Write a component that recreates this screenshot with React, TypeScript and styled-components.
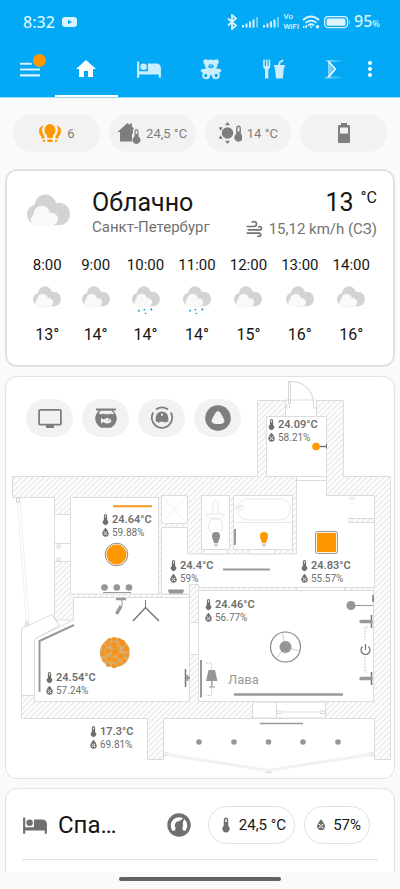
import React from "react";
import styled, { createGlobalStyle } from "styled-components";

const Global = createGlobalStyle`
  *, *::before, *::after { box-sizing: border-box; }
  body { margin: 0; background: #fafafa; font-family: Roboto, "Noto Sans", sans-serif; color: #161616; }
  button { font: inherit; color: inherit; border: 0; padding: 0; background: none; cursor: pointer; }
  h1, h2, p { margin: 0; font-weight: 400; }
`;

/* ---------- icons ---------- */

const paths = {
  home: "M10,20V14H14V20H19V12H22L12,3L2,12H5V20H10Z",
  bed: "M19,7H11V14H3V5H1V20H3V17H21V20H23V11A4,4 0 0,0 19,7M7,13A3,3 0 0,0 10,10A3,3 0 0,0 7,7A3,3 0 0,0 4,10A3,3 0 0,0 7,13Z",
  thermometer: "M15 13V5A3 3 0 0 0 9 5V13A5 5 0 1 0 15 13M12 4A1 1 0 0 1 13 5V8H11V5A1 1 0 0 1 12 4Z",
  humidity:
    "M12,3.25C12,3.25 6,10 6,14C6,17.32 8.69,20 12,20A6,6 0 0,0 18,14C18,10 12,3.25 12,3.25M14.47,9.97L15.53,11.03L9.53,17.03L8.47,15.97M9.75,10A1.25,1.25 0 0,1 11,11.25A1.25,1.25 0 0,1 9.75,12.5A1.25,1.25 0 0,1 8.5,11.25A1.25,1.25 0 0,1 9.75,10M14.25,14.5A1.25,1.25 0 0,1 15.5,15.75A1.25,1.25 0 0,1 14.25,17A1.25,1.25 0 0,1 13,15.75A1.25,1.25 0 0,1 14.25,14.5Z",
  wind: "M4,10A1,1 0 0,1 3,9A1,1 0 0,1 4,8H12A2,2 0 0,0 14,6A2,2 0 0,0 12,4C11.45,4 10.95,4.22 10.59,4.59C10.2,5 9.56,5 9.17,4.59C8.78,4.2 8.78,3.56 9.17,3.17C9.9,2.45 10.9,2 12,2A4,4 0 0,1 16,6A4,4 0 0,1 12,10H4M19,12A1,1 0 0,0 20,11A1,1 0 0,0 19,10C18.72,10 18.47,10.11 18.29,10.29C17.9,10.68 17.27,10.68 16.88,10.29C16.5,9.9 16.5,9.27 16.88,8.88C17.42,8.34 18.17,8 19,8A3,3 0 0,1 22,11A3,3 0 0,1 19,14H5A1,1 0 0,1 4,13A1,1 0 0,1 5,12H19M18,18H4A1,1 0 0,1 3,17A1,1 0 0,1 4,16H18A3,3 0 0,1 21,19A3,3 0 0,1 18,22C17.17,22 16.42,21.66 15.88,21.12C15.5,20.73 15.5,20.1 15.88,19.71C16.27,19.32 16.9,19.32 17.29,19.71C17.47,19.89 17.72,20 18,20A1,1 0 0,0 19,19A1,1 0 0,0 18,18Z",
  battery: "M16.67,4H15V2H9V4H7.33A1.33,1.33 0 0,0 6,5.33V20.67C6,21.4 6.6,22 7.33,22H16.67A1.33,1.33 0 0,0 18,20.67V5.33C18,4.6 17.4,4 16.67,4M16,12.5H8V6.5H16V12.5Z",
  dots: "M12,16A2,2 0 0,1 14,18A2,2 0 0,1 12,20A2,2 0 0,1 10,18A2,2 0 0,1 12,16M12,10A2,2 0 0,1 14,12A2,2 0 0,1 12,14A2,2 0 0,1 10,12A2,2 0 0,1 12,10M12,4A2,2 0 0,1 14,6A2,2 0 0,1 12,8A2,2 0 0,1 10,6A2,2 0 0,1 12,4Z",
  food: "M1.2,2.5H2.8V9H3.9V2.5H5.5V9H6.6V2.5H8.2V9Q8.2,11.8 6.4,12.4V21.5H3V12.4Q1.2,11.8 1.2,9ZM12,8H16.2L17,4.4L20.8,2.6L21.6,4.2L18.6,5.6L18,8H22.8V10.2H22L20.8,21.5H14L12.8,10.2H12Z",
  bulbs:
    "M12,3A6,6 0 0,0 6.5,9C6.5,11.5 7.6,13.2 9.2,14.5V17H14.8V14.5C16.4,13.2 17.5,11.5 17.5,9A6,6 0 0,0 12,3M9.2,18.5H14.8V20L14,21H10L9.2,20ZM4.5,4.8A6,6 0 0,0 1,10C1,12.5 2.2,14.3 3.5,15.3V17.5H6.5V15.2Q4,12.6 4,9Q4,6.500 5.500,4.800ZM19.5,4.8A6,6 0 0,1 23,10C23,12.5 21.8,14.3 20.5,15.3V17.5H17.5V15.2Q20,12.6 20,9Q20,6.5 18.5,4.8ZM4.5,19H7V21H5.500ZM19.5,19H17V21H18.5Z",
  homeTemp:
    "M10.5,2L0.5,11H3V20.5H15V14A4,4 0 0,1 16,12V9A3,3 0 0,1 17,7.3L15,5.8V2.5H13V4ZM19.5,8A2,2 0 0,0 17.5,10V15.5A4,4 1 1,0 21.5,15.5V10A2,2 0 0,0 19.5,8M19.5,9.2A.8,.8 0 0,1 20.3,10V13H18.7V10A.8,.8 0 0,1 19.5,9.2Z",
  sunTemp:
    "M9.5,6.2A5.8,5.8 0 1,0 15.3,12A5.8,5.8 0 0,0 9.5,6.2M9.5,1L12,4.2H7ZM9.5,23L12,19.8H7ZM0.5,6.5L4.6,6L2.8,9.8ZM0.5,17.5L4.6,18L2.8,14.2ZM20.5,4.5A2.4,2.4 0 0,0 18.1,6.9V13A4.2,4.2 0 1,0 22.9,13V6.9A2.4,2.4 0 0,0 20.5,4.5M20.5,6A.9,.9 0 0,1 21.4,7V10.5H19.6V7A.9,.9 0 0,1 20.5,6Z",
};

type IconName = keyof typeof paths;
const Glyph = styled.svg<{ $size?: number }>`
  display: block;
  flex: none;
  width: ${(p) => p.$size ?? 24}px;
  height: ${(p) => p.$size ?? 24}px;
  fill: currentColor;
`;
const Icon = ({ name, size }: { name: IconName; size?: number }) => (
  <Glyph viewBox="0 0 24 24" $size={size} aria-hidden>
    <path fillRule="evenodd" d={paths[name]} />
  </Glyph>
);

const BearIcon = () => (
  <Glyph viewBox="0 0 24 24" aria-hidden>
    <circle cx="6.800" cy="4.800" r="2.500" />
    <circle cx="17.200" cy="4.800" r="2.500" />
    <ellipse cx="12" cy="7.800" rx="6.500" ry="5.200" />
    <path d="M6 11.500h12l3.500.8q1.800 1.800-.5 3.200l-4 .5H7l-4-.5q-2.300-1.400-.5-3.200z" />
    <circle cx="7.200" cy="18.200" r="4" />
    <circle cx="16.800" cy="18.200" r="4" />
    <path d="M9 13h6v5H9z" />
    <g fill="#03a9f4">
      <ellipse cx="12" cy="9.300" rx="2.600" ry="2" />
      <ellipse cx="6.800" cy="18.600" rx="1.500" ry="1.800" />
      <ellipse cx="17.200" cy="18.600" rx="1.500" ry="1.800" />
    </g>
    <ellipse cx="12" cy="8.900" rx="1" ry=".7" />
  </Glyph>
);

const SigmaIcon = () => (
  <Glyph viewBox="0 0 24 24" aria-hidden>
    <defs>
      <linearGradient id="fade" x1="0" x2="1" y1="0" y2="0">
        <stop offset="0.2" stopColor="#fff" />
        <stop offset="1" stopColor="#fff" stopOpacity="0" />
      </linearGradient>
    </defs>
    <path d="M5 3h17v2H9l6 7-6 7.500h13v2H4v-1.500l3-.5V5L5 4z" fill="url(#fade)" opacity=".5" />
    <path d="M7.500 4.500l7 7.500-7 8" fill="none" stroke="#fff" strokeWidth="1.300" />
  </Glyph>
);

const TvIcon = () => (
  <Glyph viewBox="0 0 24 24" aria-hidden>
    <path fillRule="evenodd" d="M2 3h20a1.800 1.800 0 0 1 1.800 1.800v13a1.800 1.800 0 0 1-1.800 1.700h-6V22H8v-2.500H2a1.800 1.800 0 0 1-1.800-1.700v-13A1.800 1.800 0 0 1 2 3m0 1.800v13h20v-13z" />
  </Glyph>
);
const FishbowlIcon = () => (
  <Glyph viewBox="0 0 24 24" aria-hidden>
    <path d="M2 2.500h20v2h-3.200c2.200 2 4 4.600 4 7.500 0 4.200-2.500 7.800-6 9.800H7.200c-3.500-2-6-5.600-6-9.800 0-2.900 1.800-5.500 4-7.500H2z" />
    <path fill="#f2f2f2" d="M6.500 4.800h11l2.500 2.800q-1.500 1.500-3.300 0-1.700 1.500-3.400.2-1.700 1.300-3.500-.2-1.800 1.500-5 0zM7 12l2.500 1.500q1.800-1.500 4-1.500 3.200.2 4 2.800-.8 2.500-4 2.700-2.200 0-4-1.500L7 17.500z" />
    <circle cx="15" cy="14" r=".7" />
  </Glyph>
);
const VacuumIcon = () => (
  <Glyph viewBox="0 0 24 24" aria-hidden>
    <path d="M3.200 6.500a10.200 10.200 0 1 0 17.600 0M6 3.500a10.400 10.400 0 0 1 12 0" fill="none" stroke="currentColor" strokeWidth="1.800" />
    <path fillRule="evenodd" d="M12 5.500a6.300 6.300 0 0 1 6.300 6.300v4H16v1h-1.500v-1h-5v1H8v-1H5.700v-4A6.300 6.300 0 0 1 12 5.500m0 2a1.100 1.100 0 1 0 .01 0z" />
  </Glyph>
);
const AliceIcon = () => (
  <Glyph viewBox="0 0 24 24" $size={26} aria-hidden>
    <circle cx="12" cy="12" r="11.800" />
    <path fill="#f2f2f2" d="M12 5.800c.9 0 1.500.500 2 1.200 1.500 2.200 3.600 5.800 3.900 7.800.2 2.200-3 2.800-5.900 2.800s-6.100-.6-5.900-2.800c.3-2 2.400-5.600 3.900-7.800.5-.7 1.100-1.200 2-1.200" />
  </Glyph>
);
const GaugeIcon = () => (
  <Glyph viewBox="0 0 24 24" aria-hidden>
    <circle cx="12" cy="12" r="11.700" />
    <path d="M5.700 18a8.300 8.300 0 1 1 12.600 0z" fill="#fff" />
    <path d="M8 19.500l.5-5a4 4 0 0 1 3.200-6.300l3.600-1.900 2.700-3.500 1 1.200-2.500 3.600-.8 3a4 4 0 0 1-.2 3.900l.5 5z" />
    <path d="M6.500 17.500h11v3.500h-11z" />
  </Glyph>
);

const CloudArt = styled.svg<{ $w: number }>`
  display: block;
  width: ${(p) => p.$w}px;
  overflow: visible;
`;
const Cloud = ({ width, rain }: { width: number; rain?: boolean }) => (
  <CloudArt viewBox="0 0 42 31" $w={width} aria-hidden>
    <g fill="#d3d3d3">
      <circle cx="18" cy="11" r="10.500" />
      <circle cx="10" cy="20" r="10" />
      <circle cx="31" cy="19.500" r="11" />
      <path d="M10 12h20v18.500H10z" />
    </g>
    <g fill="#f9f9f9">
      <circle cx="14.500" cy="19.500" r="8" />
      <circle cx="9.500" cy="25" r="5.800" />
      <circle cx="24" cy="24.500" r="6.200" />
      <path d="M9.500 20h14v10.800h-14z" />
    </g>
    {rain && (
      <path
        d="M9.500 38l2-2M19 36.500l-.8-2M28 36.500l2-2.500M20 42l.6-1.800"
        stroke="#2b9fd0"
        strokeWidth="2.600"
        fill="none"
      />
    )}
  </CloudArt>
);

/* ---------- shell ---------- */

const Screen = styled.div`
  display: flex;
  flex-direction: column;
  height: 100vh;
  overflow: hidden;
`;
const Header = styled.header`
  flex: none;
  background: #03a9f4;
  color: #fff;
  border-bottom: 1px solid #9bdcfa;
`;
const StatusBar = styled.div`
  display: flex;
  align-items: center;
  justify-content: space-between;
  height: 44px;
  padding: 0 20px 0 23px;
  color: #d9f2fd;
  font-family: "Noto Sans", sans-serif;
`;
const StatusGroup = styled.div<{ $gap: number }>`
  display: flex;
  align-items: center;
  gap: ${(p) => p.$gap}px;
`;
const Clock = styled.span`
  font-size: 16px;
  font-weight: 500;
  line-height: 20px;
`;
const Percent = styled.small`
  font-size: 9px;
`;
const VoWifi = styled.span`
  display: flex;
  flex-direction: column;
  font-family: Roboto, sans-serif;
  font-size: 8px;
  line-height: 10px;
  font-weight: 500;
`;
const StatusArt = styled.svg<{ $w: number }>`
  display: block;
  width: ${(p) => p.$w}px;
  height: 16px;
  fill: currentColor;
`;
const TabBar = styled.div`
  display: flex;
  align-items: stretch;
  height: 53px;
`;
const MenuButton = styled.button`
  position: relative;
  width: 55px;
  padding-left: 20px;
  color: #d9f2fd;
`;
const Badge = styled.span`
  position: absolute;
  top: 10px;
  left: 33px;
  width: 13px;
  height: 13px;
  border-radius: 50%;
  background: #ff9800;
`;
const Tabs = styled.nav`
  display: flex;
  flex: 1;
`;
const Tab = styled.button<{ $active?: boolean; $last?: boolean }>`
  display: flex;
  align-items: center;
  justify-content: ${(p) => (p.$last ? "flex-end" : "center")};
  flex: ${(p) => (p.$last ? "0 0 40px" : "1 1 0")};
  padding: 0 0 2px;
  border-bottom: 2px solid ${(p) => (p.$active ? "#fff" : "transparent")};
  color: ${(p) => (p.$active ? "#fff" : "#c9edfd")};
`;
const MoreButton = styled.button`
  display: flex;
  align-items: center;
  justify-content: center;
  width: 50px;
  padding: 0 0 4px;
  margin-right: 5px;
`;
const Content = styled.main`
  flex: 1;
  min-height: 0;
  overflow-y: auto;
  scrollbar-width: none;
  padding: 0 5px;
`;
const NavBar = styled.footer`
  flex: none;
  display: flex;
  justify-content: center;
  height: 17px;
  padding-top: 5px;
`;
const Handle = styled.div`
  width: 162px;
  height: 4px;
  border-radius: 2px;
  background: #626262;
`;

/* ---------- chips ---------- */

const ChipRow = styled.div`
  display: grid;
  grid-template-columns: repeat(4, 1fr);
  gap: 9px;
  padding: 16px 8px 17px;
`;
const Chip = styled.button`
  display: flex;
  align-items: center;
  justify-content: center;
  gap: 5px;
  height: 38px;
  border-radius: 19px;
  background: #f2f2f2;
  color: #7e7e7e;
  font-size: 13px;
  white-space: nowrap;
`;
const Lit = styled.span`
  color: #ff9800;
`;

/* ---------- weather ---------- */

const Card = styled.section<{ $border?: number }>`
  border: ${(p) => p.$border ?? 1}px solid #e1e1e1;
  border-radius: 12px;
  background: #fff;
`;
const WeatherCard = styled(Card)`
  padding: 16px 16px 20px;
  margin-bottom: 9px;
`;
const Now = styled.div`
  display: flex;
  align-items: flex-start;
  padding: 0 0 0 4px;
`;
const NowIcon = styled.div`
  width: 65px;
  padding-top: 7px;
`;
const NowText = styled.div`
  flex: 1;
`;
const NowRight = styled.div`
  display: flex;
  flex-direction: column;
  align-items: flex-end;
`;
const Big = styled.h1`
  font-size: 25px;
  line-height: 32px;
`;
const Unit = styled.sup`
  margin-left: 7px;
  font-size: 16px;
  line-height: 16px;
  vertical-align: 8px;
`;
const Muted = styled.p`
  display: flex;
  align-items: center;
  gap: 5px;
  font-size: 15px;
  line-height: 16px;
  color: #727272;
`;
const Hours = styled.div`
  display: grid;
  grid-template-columns: 48fr 48fr repeat(5, 51fr);
  padding-top: 16px;
`;
const Hour = styled.div`
  display: flex;
  flex-direction: column;
  align-items: center;
`;
const HourTime = styled.span`
  font-size: 15px;
  line-height: 20px;
  margin-bottom: 11px;
`;
const HourTemp = styled.span`
  font-size: 16px;
  line-height: 20px;
  margin-top: 18px;
`;

const hours = [
  { t: "8:00", d: "13°" },
  { t: "9:00", d: "14°" },
  { t: "10:00", d: "14°", rain: true },
  { t: "11:00", d: "14°", rain: true },
  { t: "12:00", d: "15°" },
  { t: "13:00", d: "16°" },
  { t: "14:00", d: "16°" },
];

/* ---------- floor plan ---------- */

const PlanCard = styled(Card)`
  position: relative;
  margin-bottom: 9px;
  overflow: hidden;
`;
const PlanArt = styled.svg`
  display: block;
  width: 100%;
`;
const PlanButtons = styled.div`
  position: absolute;
  top: 22px;
  left: 20px;
  display: flex;
  gap: 9px;
`;
const PlanButton = styled.button`
  display: flex;
  align-items: center;
  justify-content: center;
  width: 47px;
  height: 38px;
  border-radius: 19px;
  background: #f2f2f2;
  color: #7e7e7e;
`;
const Pin = styled.div<{ $x: number; $y: number }>`
  position: absolute;
  left: calc(100% * ${(p) => p.$x} / 388);
  top: calc(100% * ${(p) => p.$y} / 401);
  color: #6f6f6f;
`;
const Temp = styled.div`
  display: flex;
  align-items: center;
  font-size: 11px;
  font-weight: 600;
  line-height: 13px;
`;
const Hum = styled(Temp)`
  font-size: 10px;
  font-weight: 400;
`;
const Device = styled(Pin)`
  font-size: 13px;
  line-height: 16px;
  color: #999;
`;

const sensors = [
  { x: 259, y: 41, t: "24.09°C", h: "58.21%" },
  { x: 93, y: 136, t: "24.64°C", h: "59.88%" },
  { x: 161, y: 182, t: "24.4°C", h: "59%" },
  { x: 292, y: 182, t: "24.83°C", h: "55.57%" },
  { x: 196, y: 221, t: "24.46°C", h: "56.77%" },
  { x: 37, y: 294, t: "24.54°C", h: "57.24%" },
  { x: 81, y: 348, t: "17.3°C", h: "69.81%" },
];

const stones = [
  [115, 652, 3.4], [108, 651, 2.6], [122, 643, 3.2], [114, 645, 3], [108, 644, 2.4], [104, 647, 2],
  [126, 649, 3], [121, 656, 3], [115, 660, 2.8], [109, 659, 2.6], [103, 654, 2.4], [124, 661, 2.2],
  [119, 664, 2], [114, 666, 2.2], [108, 665, 2], [104, 660, 1.8], [127, 655, 2], [118, 648, 1.6],
  [119, 639.5, 1.6], [114, 639, 2], [109, 640, 1.8], [112, 656, 1.4], [103, 650, 1.4],
];

const FloorPlan = () => (
  <PlanArt viewBox="6 377 388 401" role="img" aria-label="План квартиры">
    <defs>
      <pattern id="hatch" width="4" height="4" patternUnits="userSpaceOnUse" patternTransform="rotate(45)">
        <rect width="4" height="4" fill="#fff" />
        <rect width="1.600" height="4" fill="#ebebeb" />
      </pattern>
    </defs>
    <g fill="url(#hatch)" stroke="#dcdcdc">
      <path d="M12.500 476.500H257.500V400.500H343.500V476.500H390.500V759.500H374.500V718.500H163.500V759.500H147.500V718.500H21.500V695.500H34.500L73 620H54.500V497.500H12.500z" />
    </g>
    <g fill="#fff" stroke="#dcdcdc">
      <path d="M266.500 416.500h60v60h-60z" />
      <path d="M285.500 400h31v16.500h-31z" />
      <path d="M70.500 497.500h88v96.500h-88z" />
      <path d="M161.500 495.500h26v28h-26z" />
      <path d="M161.500 527.500h26v26.500H296.500V476.500H326.500V495.500H374.500V587.500H198.500V584.500H189.500V594H161.500z" />
      <path d="M201.500 495.500h28v54h-28zM233.500 495.500h59v54h-59z" />
      <path d="M198.500 590.500H373.500V701.500H198.500zM73.500 597.500H189.500V701.500H34.500V639L73.500 620z" />
      <path d="M189.500 622.500h9v32h-9zM54.500 514.500h16v29h-16zM54.500 543.500h16v18h-16zM252.500 702h24v16h-24zM276.500 702h49v16h-49z" />
      <path d="M21.500 628.500L52 614.500L59.500 625.500L34.500 639V695.500H21.500z" />
      <path d="M296.500 587.500h48v3h-48zM161.500 594.500h28v3h-28z" />
      <path d="M204 549.500h23v4.500h-23zM249.500 549.500h25v4.500h-25z" />
    </g>
    <path d="M348.500 518.500h26v4h-26z" fill="url(#hatch)" stroke="#dcdcdc" />
    <path d="M296.500 480.500h30M350 496v3h4v-3M286.500 404v4h3v-4M313.500 404v4h3v-4M52 614.500l7.500 11" fill="none" stroke="#dcdcdc" />
    <path d="M288.500 404V381.500H290.500V404M290 381.500a22 22 0 0 1 23.500 22.500" fill="none" stroke="#d4d4d4" />
    <path d="M162 496l25 27M187 496l-25 27" stroke="#efefef" />
    <g fill="none" stroke="#e8e8e8">
      <rect x="238" y="499" width="52" height="21" rx="9" />
      <path d="M234 522.500h58M233 507h9M236 504v6" />
      <circle cx="241" cy="507.500" r="2.500" />
      <path d="M206.500 514h18q-1 4-6 5h-6q-5-1-6-5zM213 514v-12q2.500-4 5 0v12" />
      <ellipse cx="215.500" cy="526" rx="7" ry="8" />
      <path d="M17.500 501l9 124M20 501l9 122" stroke="#efefef" />
      <path d="M16.500 498h3v4h-3zM25.500 622h3v4h-3zM163.500 753h4v2.500h-4zM266 770h5v2.500h-5zM369 753h4v2.500h-4zM276.500 711h5v2.500h-5zM320 711h5v2.500h-5zM57 545h3v3h-3zM57 558h3v3h-3z" stroke="#d4d4d4" />
      <path d="M281 712h39" stroke="#ededed" strokeWidth="2" />
      <path d="M167 754.500l101 16 102-16" stroke="#f1f1f1" strokeWidth="3" />
      <path d="M206 663h5.500v7M211.500 688v7.500H206M368 627h-3v13M365 657v15h3" strokeDasharray="2 1" stroke="#ccc" />
    </g>
    <g stroke="#999" fill="none">
      <path d="M39.500 692V641L74 625" strokeWidth="2" />
      <path d="M201 660v37.500" strokeWidth="2" />
      <path d="M223 569.500h47" strokeWidth="2" />
      <path d="M234 694.500h109" strokeWidth="2.500" />
      <path d="M260 723.500h43" strokeWidth="1.500" />
      <path d="M235 529v16" strokeWidth="2" />
      <path d="M103 592.500h28" />
      <path d="M133 621l12.500-13.500L159 621" stroke="#777" strokeWidth="1.500" />
      <path d="M145.500 600v8" stroke="#777" />
      <path d="M116 599h10" strokeWidth="2.500" />
      <path d="M121.500 600q2 4-.5 7" />
      <path d="M121 606l-4.500 8" strokeWidth="3.500" />
      <path d="M185.500 669v18M373 595v7M371.500 615v13M371.500 672v13" strokeWidth="1.500" stroke="#777" />
      <path d="M186 678h4M187.500 675v6" strokeWidth="2" />
      <path d="M351 605.500h22" />
      <path d="M361 621.500h10M361 678.500h10" strokeWidth="3.500" strokeLinecap="round" />
      <path d="M316 446.500h10" strokeWidth="1.500" stroke="#777" />
      <path d="M326.500 444v4.500" stroke="#777" />
      <circle cx="285.500" cy="647" r="15" stroke="#858585" strokeWidth="1.200" />
      <path d="M285.500 647l-3-13.500M285.500 647l13.500 4M285.500 647l-9 11" stroke="#ccc" />
      <path d="M362.500 646.500a4.500 4.500 0 1 0 6 0M365.500 644v6" stroke="#777" strokeWidth="1.300" />
    </g>
    <g fill="#969696">
      <circle cx="285.500" cy="647" r="6" />
      <circle cx="351" cy="605.500" r="4.500" />
      <circle cx="104.500" cy="587.500" r="3.300" />
      <circle cx="116.800" cy="587.500" r="3.300" />
      <circle cx="129" cy="587.500" r="3.300" />
      <path d="M168 589.500h16l-1 4h-14z" />
      {[199, 234, 268.5, 303, 338].map((x) => (
        <circle key={x} cx={x} cy="742" r="2.800" />
      ))}
      <path d="M208.500 670h6.500l2.500 11h-11.500zM211.200 681h1.300v5.500h2.500v1h-6v-1h2.200z" />
    </g>
    {[[216, "#8e8e8e"], [264, "#ff9800"]].map(([x, color]) => (
      <g key={x} transform={`translate(${x} 538)`}>
        <path d="M0-6a4 4 0 0 1 4 4Q4 0 1.800 5H-1.800Q-4 0-4-2A4 4 0 0 1 0-6" fill={color as string} />
        <path d="M-1.500 5.500h3v3h-3z" fill="#c8c8c8" />
      </g>
    ))}
    <path d="M113 506.300h39" stroke="#f29a1c" strokeWidth="2" />
    <circle cx="316" cy="446.500" r="3.800" fill="#ff9800" />
    <circle cx="116.500" cy="554.500" r="11.300" fill="#fff3dd" stroke="#8b8b8b" />
    <circle cx="116.500" cy="554.500" r="10" fill="#ff9800" />
    <rect x="315.500" y="531.500" width="22" height="22" rx="2" fill="#fff3dd" stroke="#999" />
    <rect x="317" y="533" width="19" height="19" fill="#ff9800" />
    <circle cx="114.800" cy="652.500" r="15" fill="#d9ad6d" />
    {stones.map(([x, y, r]) => (
      <circle key={`${x}-${y}`} cx={x} cy={y} r={r} fill="#f5931d" />
    ))}
  </PlanArt>
);

/* ---------- room ---------- */

const RoomCard = styled(Card)`
  padding: 17px 16px 40px;
`;
const RoomHead = styled.div`
  display: flex;
  align-items: center;
  padding: 0 8px 15px 0;
  color: #6f6f6f;
`;
const RoomTitle = styled.h2`
  flex: 1;
  padding-left: 10px;
  font-size: 24px;
  line-height: 28px;
  color: #161616;
`;
const Reading = styled.button<{ $first?: boolean }>`
  display: flex;
  align-items: center;
  justify-content: center;
  gap: 4px;
  height: 38px;
  margin-left: ${(p) => (p.$first ? 17 : 9)}px;
  padding: 0 8px;
  border: 1px solid #e1e1e1;
  border-radius: 19px;
  font-size: 15px;
  color: #161616;
  white-space: nowrap;
`;
const Grey = styled.span`
  color: #6f6f6f;
`;
const Rule = styled.hr`
  margin: 0;
  border: 0;
  border-top: 1px solid #e1e1e1;
`;

const Signal = () => (
  <StatusArt viewBox="0 0 18 16" $w={18}>
    <path d="M1 11h2v2.500H1zM4.500 9.500h2v4h-2zM8 7.500h2v6H8zM11.500 5.500h2v8h-2z" />
    <path d="M15 3h2v10.500h-2z" opacity=".5" />
  </StatusArt>
);

export default function App() {
  return (
    <Screen>
      <Global />
      <Header>
        <StatusBar>
          <StatusGroup $gap={7}>
            <Clock>8:32</Clock>
            <StatusArt viewBox="0 0 15 16" $w={15}>
              <path fillRule="evenodd" d="M3 3h9a3 3 0 0 1 3 3v4a3 3 0 0 1-3 3H3a3 3 0 0 1-3-3V6a3 3 0 0 1 3-3m3 2.700v4.600l4-2.300z" />
            </StatusArt>
          </StatusGroup>
          <StatusGroup $gap={3}>
            <StatusArt viewBox="0 0 12 16" $w={12}>
              <path d="M2 4.500l8 7L6 15V1l4 3.500-8 7" fill="none" stroke="currentColor" strokeWidth="1.800" />
            </StatusArt>
            <Signal />
            <Signal />
            <VoWifi>
              <span>Vo</span>
              <span>WiFi</span>
            </VoWifi>
            <StatusArt viewBox="0 0 18 16" $w={18}>
              <path d="M1 6q8-7 16 0M3.500 8.800q5.500-4.500 11 0M6 11.500q3-2.500 6 0" fill="none" stroke="currentColor" strokeWidth="1.700" />
              <path d="M7.500 12.500h3L9 14.500zM1 12h1.500v2H1zM3.500 11H5v3H3.500z" />
              <circle cx="15.500" cy="12.700" r="1.800" />
            </StatusArt>
            <StatusArt viewBox="0 0 28 16" $w={28}>
              <rect x="1.600" y="2.600" width="23" height="11" rx="3.500" fill="none" stroke="currentColor" strokeWidth="1.200" />
              <rect x="3.500" y="4.500" width="19" height="7.200" rx="1.500" />
              <path d="M26 6q1.500 2 0 4.500z" />
            </StatusArt>
            <Clock>
              95<Percent>%</Percent>
            </Clock>
          </StatusGroup>
        </StatusBar>
        <TabBar>
          <MenuButton aria-label="Меню">
            <Glyph viewBox="0 0 20 24" $size={20} aria-hidden>
              <path d="M-2 2h14v2.500H-2zM-2 9h24v2.500H-2zM-2 16h24v2.500H-2z" />
            </Glyph>
            <Badge />
          </MenuButton>
          <Tabs>
            <Tab $active aria-label="Дом"><Icon name="home" /></Tab>
            <Tab aria-label="Спальня"><Icon name="bed" size={26} /></Tab>
            <Tab aria-label="Детская"><BearIcon /></Tab>
            <Tab aria-label="Кухня"><Icon name="food" /></Tab>
            <Tab aria-label="Итоги" $last><SigmaIcon /></Tab>
          </Tabs>
          <MoreButton aria-label="Ещё"><Icon name="dots" /></MoreButton>
        </TabBar>
      </Header>

      <Content>
        <ChipRow>
          <Chip><Lit><Icon name="bulbs" /></Lit>6</Chip>
          <Chip><Icon name="homeTemp" />24,5 °C</Chip>
          <Chip><Icon name="sunTemp" />14 °C</Chip>
          <Chip aria-label="Батарея"><Icon name="battery" /></Chip>
        </ChipRow>

        <WeatherCard $border={2}>
          <Now>
            <NowIcon><Cloud width={43} /></NowIcon>
            <NowText>
              <Big>Облачно</Big>
              <Muted>Санкт-Петербург</Muted>
            </NowText>
            <NowRight>
              <Big as="p">13<Unit>°C</Unit></Big>
              <Muted><Icon name="wind" size={20} />15,12 km/h (СЗ)</Muted>
            </NowRight>
          </Now>
          <Hours>
            {hours.map((h) => (
              <Hour key={h.t}>
                <HourTime>{h.t}</HourTime>
                <Cloud width={28} rain={h.rain} />
                <HourTemp>{h.d}</HourTemp>
              </Hour>
            ))}
          </Hours>
        </WeatherCard>

        <PlanCard>
          <FloorPlan />
          <PlanButtons>
            <PlanButton aria-label="Телевизор"><TvIcon /></PlanButton>
            <PlanButton aria-label="Аквариум"><FishbowlIcon /></PlanButton>
            <PlanButton aria-label="Пылесос"><VacuumIcon /></PlanButton>
            <PlanButton aria-label="Алиса"><AliceIcon /></PlanButton>
          </PlanButtons>
          {sensors.map((s) => (
            <Pin key={s.t} $x={s.x} $y={s.y}>
              <Temp><Icon name="thermometer" size={13} />{s.t}</Temp>
              <Hum><Icon name="humidity" size={13} />{s.h}</Hum>
            </Pin>
          ))}
          <Device $x={222} $y={295}>Лава</Device>
        </PlanCard>

        <RoomCard>
          <RoomHead>
            <Icon name="bed" size={26} />
            <RoomTitle>Спа…</RoomTitle>
            <GaugeIcon />
            <Reading $first><Grey><Icon name="thermometer" size={18} /></Grey>24,5 °C</Reading>
            <Reading><Grey><Icon name="humidity" size={16} /></Grey>57%</Reading>
          </RoomHead>
          <Rule />
        </RoomCard>
      </Content>

      <NavBar><Handle /></NavBar>
    </Screen>
  );
}
